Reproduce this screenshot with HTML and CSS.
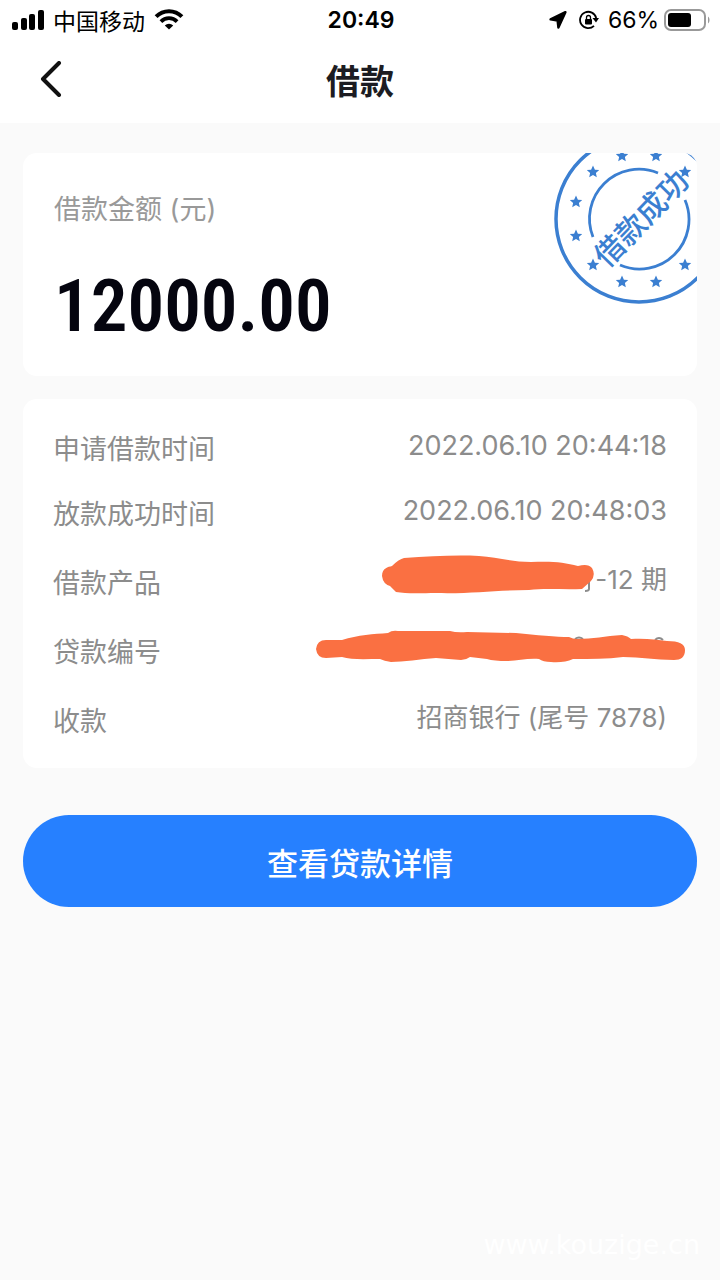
FILE: index.html
```
<!DOCTYPE html>
<html lang="zh-CN">
<head>
    <meta charset="UTF-8">
    <meta name="viewport" content="width=device-width, initial-scale=1.0">
    <title>借款</title>
    <link rel="stylesheet" href="styles.css">
</head>
<body>
    <header class="header">
        <div class="status-bar">
            <div class="status-left">
                <svg width="32" height="20" viewBox="0 0 32 20">
                    <rect x="0" y="12" width="6" height="8" rx="2"/>
                    <rect x="9" y="8" width="6" height="12" rx="2"/>
                    <rect x="17" y="4" width="6" height="16" rx="2"/>
                    <rect x="26" y="0" width="6" height="20" rx="2"/>
                </svg>
                <span>中国移动</span>
                <svg width="30" height="21" viewBox="0 0 29 21">
                    <path d="M1.6 7.6a18 18 0 0 1 25.8 0" fill="none" stroke="#000" stroke-width="4"/>
                    <path d="M6.4 12.6a11.4 11.4 0 0 1 16.2 0" fill="none" stroke="#000" stroke-width="3.8"/>
                    <path d="M14.5 20.6l-4.2-4.2a6 6 0 0 1 8.4 0z"/>
                </svg>
            </div>
            <span class="time">20:49</span>
            <div class="status-right">
                <svg width="18" height="18" viewBox="0 0 18 18">
                    <path d="M16.4 1.2L1.6 8.4l7 1.2.8 7z" stroke="#000" stroke-width="2.4" stroke-linejoin="round"/>
                </svg>
                <svg class="lock" width="20" height="20" viewBox="0 0 20 20">
                    <path d="M15 15.8A8.2 8.2 0 1 1 17.2 8" fill="none" stroke="#000" stroke-width="1.8"/>
                    <path d="M13.5 8H20l-3 4.5z"/>
                    <rect x="6" y="9" width="7" height="5.5" rx="1"/>
                    <path d="M7.5 9.5v-2a2 2 0 0 1 4 0v2" fill="none" stroke="#000" stroke-width="1.3"/>
                </svg>
                <span>66%</span>
                <svg class="battery" width="46" height="22" viewBox="0 0 46 22">
                    <rect x="1" y="1" width="40" height="20" rx="6" fill="none" stroke="#999" stroke-width="2"/>
                    <rect x="4" y="4" width="23" height="14" rx="3"/>
                    <path d="M44 7.5c2 1.5 2 5.5 0 7z" fill="#999"/>
                </svg>
            </div>
        </div>
        <nav class="nav-bar">
            <button type="button" class="back-btn" aria-label="返回">
                <svg width="22" height="36" viewBox="0 0 22 36">
                    <path d="M19 2L3 18l16 16" fill="none" stroke="#111" stroke-width="4" stroke-linecap="round" stroke-linejoin="round"/>
                </svg>
            </button>
            <h1>借款</h1>
        </nav>
    </header>

    <main class="content">
        <section class="card amount-card">
            <p class="amount-label">借款金额 (元)</p>
            <p class="amount">12000.00</p>
            <svg class="stamp" width="144" height="152" viewBox="-86 -66 144 152">
                <defs>
                    <path id="star" d="M0-6.5L1.9-2.3 6.2-2 2.9.9 3.8 5.3 0 3-3.8 5.3-2.9.9-6.2-2-1.9-2.3z"/>
                </defs>
                <g fill="none" stroke="#3b7fd1">
                    <circle r="83" stroke-width="3.5"/>
                    <path d="M-46 18A49.5 49.5 0 0 1 19-46" stroke-width="2.8"/>
                    <path d="M46-19A49.5 49.5 0 0 1-19 46" stroke-width="2.8"/>
                </g>
                <g fill="#3b7fd1">
                    <use href="#star" x="-63" y="-17"/>
                    <use href="#star" x="-63" y="17"/>
                    <use href="#star" x="-46" y="-47"/>
                    <use href="#star" x="-46" y="46"/>
                    <use href="#star" x="-17" y="-63"/>
                    <use href="#star" x="-17" y="63"/>
                    <use href="#star" x="17" y="-63"/>
                    <use href="#star" x="17" y="63"/>
                    <use href="#star" x="46" y="-47"/>
                    <use href="#star" x="46" y="46"/>
                </g>
                <text class="stamp-text" x="2" y="12" text-anchor="middle" transform="rotate(-46)">借款成功</text>
            </svg>
        </section>

        <section class="card">
            <dl>
                <div class="row">
                    <dt>申请借款时间</dt>
                    <dd>2022.06.10 20:44:18</dd>
                </div>
                <div class="row">
                    <dt>放款成功时间</dt>
                    <dd>2022.06.10 20:48:03</dd>
                </div>
                <div class="row tall">
                    <dt>借款产品</dt>
                    <dd>
                        <svg class="mask" width="214" height="40" viewBox="0 0 214 40">
                            <path d="M208 26v8q0 2-4 2" fill="none" stroke="#8c8c8c" stroke-width="2"/>
                            <path d="M1 21C1 13 7 12 11 11Q18 4 23 3C50 1 76 0 98 1C115 2 130 7 150 7C170 6 183 7 197 11Q207 8 211 13Q215 20 210 26L201 34C183 35 165 33 148 35C115 35 90 39 55 38C42 38 26 39 15 37L9 31Q2 29 1 21z" fill="#fa7042"/>
                        </svg>
                        <span>-12 期</span>
                    </dd>
                </div>
                <div class="row tall">
                    <dt>贷款编号</dt>
                    <dd>
                        <svg class="mask-wide" width="370" height="36" viewBox="0 0 370 36">
                            <path d="M259 9q4-3 8 0M339 10q4-4 8 0" fill="none" stroke="#8c8c8c" stroke-width="2"/>
                            <path d="M10 10L26 10C42 5 58 4 72 3Q76 0 82 1L134 1Q141 3 151 2L200 3C220 5 241 7 253 7Q257 9 261 9C277 9 289 6 306 5Q312 6 315 9C330 8 341 10 351 11C363 11 369 14 369 20C369 27 365 30 358 30C339 30 325 27 307 27C291 29 275 29 257 29Q248 33 235 32Q227 32 223 29C211 28 202 31 191 31Q178 31 171 29L154 27Q150 30 145 30L120 28C105 29 87 32 75 32Q68 31 64 29C50 29 35 30 26 27L10 28Q1 28 0 19Q1 10 10 10z" fill="#fa7042"/>
                        </svg>
                    </dd>
                </div>
                <div class="row tall">
                    <dt>收款</dt>
                    <dd>招商银行 (尾号 7878)</dd>
                </div>
            </dl>
        </section>

        <button type="button" class="detail-btn">查看贷款详情</button>
    </main>

    <div class="watermark">www.kouzige.cn</div>
</body>
</html>
```
FILE: styles.css
```
* {
    margin: 0;
    padding: 0;
    box-sizing: border-box;
}

body {
    position: relative;
    min-height: 100vh;
    background: #fafafa;
    color: #000;
    font-family: Inter, "Noto Sans CJK SC", sans-serif;
}

svg {
    display: block;
    flex-shrink: 0;
}

.header {
    background: #fff;
}

.status-bar {
    display: grid;
    grid-template-columns: 1fr auto 1fr;
    align-items: center;
    height: 39px;
    padding: 0 10px 0 12px;
    font-size: 23px;
}

.status-left,
.status-right {
    display: flex;
    align-items: center;
    gap: 9px;
}

.status-right {
    justify-content: flex-end;
}

.lock {
    margin-left: 3px;
}

.battery {
    margin-left: -4px;
}

.time {
    font-weight: 600;
}

.nav-bar {
    position: relative;
    display: flex;
    justify-content: center;
    align-items: center;
    height: 84px;
    padding-bottom: 4px;
}

.back-btn {
    position: absolute;
    left: 40px;
    border: none;
    background: none;
    cursor: pointer;
}

h1 {
    color: #1c1c22;
    font-size: 34px;
    font-weight: 700;
}

.content {
    padding: 30px 23px;
}

.card {
    margin-bottom: 23px;
    padding: 14px 30px 18px;
    background: #fff;
    border-radius: 14px;
}

.amount-card {
    position: relative;
    height: 223px;
    padding: 37px 31px;
    overflow: hidden;
}

.amount-label {
    color: #999;
    font-size: 27px;
    line-height: 40px;
}

.amount {
    margin-top: 31px;
    color: #05050f;
    font-family: "Roboto Condensed", Roboto, sans-serif;
    font-size: 73px;
    font-weight: 600;
    line-height: 90px;
}

.stamp {
    position: absolute;
    top: 0;
    right: 0;
}

.stamp-text {
    fill: #3b7fd1;
    font-size: 30px;
    font-weight: 500;
}

.row {
    display: flex;
    justify-content: space-between;
    align-items: center;
    height: 65px;
    color: #8c8c8c;
    font-size: 27px;
}

.row.tall {
    height: 69px;
}

dt {
    padding-top: 3px;
}

.tall dt {
    padding-top: 8px;
}

dd {
    display: flex;
    align-items: center;
}

.tall dd {
    font-size: 26px;
}

.mask {
    margin-bottom: 6px;
}

.mask-wide {
    margin: 2px -19px 0 0;
}

.detail-btn {
    display: block;
    width: 100%;
    height: 92px;
    margin-top: 47px;
    border: none;
    border-radius: 46px;
    background: #2680ff;
    color: #fff;
    font-family: inherit;
    font-size: 31px;
    font-weight: 500;
    cursor: pointer;
}

.watermark {
    position: absolute;
    right: 20px;
    bottom: 20px;
    color: #fff;
    font-family: "DejaVu Sans", sans-serif;
    font-size: 27px;
}
```
